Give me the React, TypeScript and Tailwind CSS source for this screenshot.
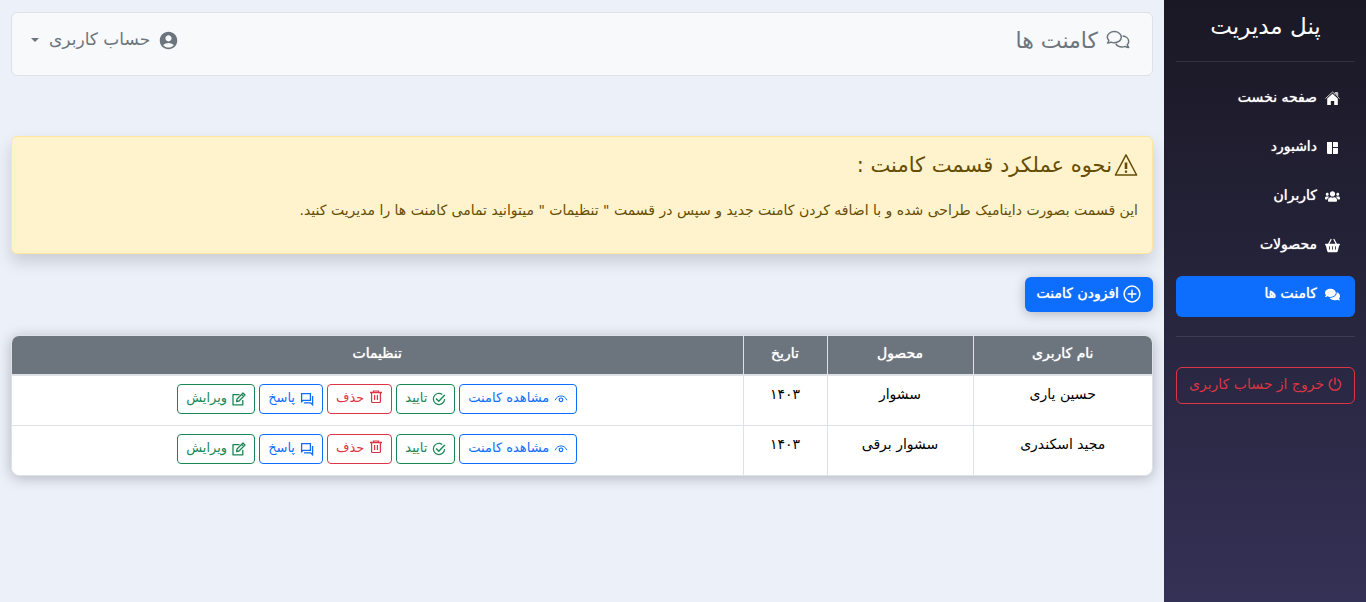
import React from "react";
import type { ReactNode } from "react";
import { FaUsers, FaComments } from "react-icons/fa";
import { FaBasketShopping } from "react-icons/fa6";
import { MdAccountCircle } from "react-icons/md";

function HomeIcon() {
  return (
    <svg viewBox="0 0 15 15" className="size-[15px]" fill="currentColor" aria-hidden="true">
      <path d="M.4 7.6 7.5 1l2.6 2.4V1.6h2.6v4.2l1.9 1.8" fill="none" stroke="currentColor" strokeWidth="1" opacity="0.75" />
      <path d="M10.6 1.8h1.7v3.8l-1.7-1.5z" opacity="0.7" />
      <path d="M7.5 2.8 2.2 7.6V14h3.6v-4h3.4v4h3.6V7.6z" />
    </svg>
  );
}

function DashboardIcon() {
  return (
    <svg viewBox="0 0 15 15" className="size-[15px]" fill="currentColor" aria-hidden="true">
      <path d="M2 2h5v12H3a1 1 0 0 1-1-1zM8 2h4a1 1 0 0 1 1 1v4H8zM8 8h5v5a1 1 0 0 1-1 1H8z" />
    </svg>
  );
}

function CommentsIcon() {
  return (
    <svg viewBox="0 0 24 24" className="size-6" fill="none" stroke="currentColor" strokeWidth="1.5" strokeLinejoin="round" aria-hidden="true">
      <path d="M8.3 3.6c3.9 0 7 2.5 7 5.6s-3.1 5.6-7 5.6c-1.3 0-2.400-.2-3.400-.7-.9.600-2 1-3.400 1 .7-.9 1.200-1.900 1.300-2.800C1.900 11.400 1.300 10.400 1.300 9.200c0-3.100 3.100-5.600 7-5.600z" />
      <path d="M16.600 8c3.500.2 6.100 2.500 6.100 5.400 0 1.300-.5 2.300-1.400 3.200.2 1 .6 1.900 1.400 2.900-1.400 0-2.600-.4-3.500-1.100-1 .4-2 .6-3.100.6-2.900 0-5.300-1.300-6.300-3.400" />
    </svg>
  );
}

function WarningIcon() {
  return (
    <svg viewBox="0 0 24 24" className="size-6 shrink-0" fill="none" stroke="currentColor" strokeWidth="1.5" aria-hidden="true">
      <path d="M12 1.800 22.600 22H1.400z" strokeLinejoin="round" />
      <path d="M12 9.500v6.500" strokeWidth="2.600" />
      <path d="M12 17.500v2.300" strokeWidth="2.200" />
    </svg>
  );
}

function PlusIcon() {
  return (
    <svg viewBox="0 0 18 18" className="size-[18px]" fill="none" stroke="currentColor" strokeWidth="1.500" aria-hidden="true">
      <circle cx="9" cy="9" r="7.900" />
      <path d="M9 5.200v7.600M5.200 9h7.600" strokeLinecap="round" />
    </svg>
  );
}

function PowerIcon() {
  return (
    <svg viewBox="0 0 14 14" className="size-[14px]" fill="none" stroke="currentColor" strokeWidth="1.500" strokeLinecap="round" aria-hidden="true">
      <path d="M7 .9v6M4 2.600a5.700 5.700 0 1 0 6 0" />
    </svg>
  );
}

function EyeIcon() {
  return (
    <svg viewBox="0 0 14 14" className="size-[14px]" fill="none" stroke="currentColor" aria-hidden="true">
      <path d="M1.200 8.200C3.200 2.500 10.800 2.500 12.800 8.200" />
      <circle cx="7" cy="7.800" r="1.800" strokeWidth="1.200" />
    </svg>
  );
}

function CheckIcon() {
  return (
    <svg viewBox="0 0 14 14" className="size-[14px]" fill="none" stroke="currentColor" strokeWidth="1.200" aria-hidden="true">
      <path d="M10.300 2.400A5.600 5.600 0 1 0 12.600 7" />
      <path d="m4 6.400 2.800 2.800 6-6.200" strokeWidth="1.400" />
    </svg>
  );
}

function TrashIcon() {
  return (
    <svg viewBox="0 0 14 14" className="mb-1 size-[14px]" fill="none" stroke="currentColor" strokeWidth="1.200" aria-hidden="true">
      <path d="M1 2.500h12" strokeWidth="1.600" />
      <path d="M4.500 2V1h5v1M2.600 2.500v9.200q0 .8.8.8h7.200q.8 0 .8-.8V2.500M5.600 5v5M8.400 5v5" />
    </svg>
  );
}

function ReplyIcon() {
  return (
    <svg viewBox="0 0 14 14" className="size-[14px]" fill="none" stroke="currentColor" strokeWidth="1.300" aria-hidden="true">
      <path d="M1.600 9.600V1.600h8.800v6.800H3z" />
      <path d="M12.600 4v8.800l-1.900-1.900H4" />
    </svg>
  );
}

function EditIcon() {
  return (
    <svg viewBox="0 0 14 14" className="size-[14px]" fill="none" stroke="currentColor" strokeWidth="1.300" strokeLinejoin="round" aria-hidden="true">
      <path d="M7.500 2.600H1v10.300h9.800V8" />
      <path d="M4.600 9.500 5 7l6-6 2 2-6 6zM9.600 2.400l2 2" />
    </svg>
  );
}

const links: { label: string; icon: ReactNode; active?: boolean }[] = [
  { label: "صفحه نخست", icon: <HomeIcon /> },
  { label: "داشبورد", icon: <DashboardIcon /> },
  { label: "کاربران", icon: <FaUsers size={15} /> },
  { label: "محصولات", icon: <FaBasketShopping size={15} /> },
  { label: "کامنت ها", icon: <FaComments size={15} />, active: true },
];

const rows = [
  { user: "حسین یاری", product: "سشوار", date: "۱۴۰۳" },
  { user: "مجید اسکندری", product: "سشوار برقی", date: "۱۴۰۳" },
];

const blue = "border-[#0d6efd] text-[#0d6efd]";
const green = "border-[#198754] text-[#198754]";
const red = "border-[#dc3545] text-[#dc3545]";

const actions = [
  { label: "مشاهده کامنت", icon: <EyeIcon />, tone: blue },
  { label: "تایید", icon: <CheckIcon />, tone: green },
  { label: "حذف", icon: <TrashIcon />, tone: red },
  { label: "پاسخ", icon: <ReplyIcon />, tone: blue },
  { label: "ویرایش", icon: <EditIcon />, tone: green },
];

function Sidebar() {
  return (
    <aside className="w-[202px] shrink-0 bg-linear-to-b from-[#1a1824] to-[#343156] pl-3 pr-[11px] text-white">
      <h1 className="pt-2 text-center text-[23px] leading-9">پنل مدیریت</h1>
      <hr className="mt-[17px] border-white/10" />
      <nav className="mt-[18px] flex flex-col gap-2">
        {links.map((l) => (
          <a
            key={l.label}
            href="#"
            className={`flex h-[41px] items-center gap-2 rounded-md px-[15px] pb-2 text-sm text-shadow-[0_0_1px_#ffffff] ${l.active ? "bg-[#0d6efd]" : ""}`}
          >
            <span className="mt-1">{l.icon}</span>
            {l.label}
          </a>
        ))}
      </nav>
      <hr className="mt-[19px] border-white/10" />
      <button className="mt-[30px] flex h-[37px] w-full items-center justify-center gap-1 rounded-md border border-[#dc3545] pb-1 text-sm text-[#dc3545]">
        <PowerIcon />
        خروج از حساب کاربری
      </button>
    </aside>
  );
}

export default function App() {
  return (
    <div dir="rtl" className="flex min-h-screen bg-[#ecf0f9] font-['DejaVu_Sans',sans-serif]">
      <Sidebar />
      <main className="min-w-0 flex-1 px-[11px] pt-3">
        <header className="flex h-16 items-center justify-between rounded-md border border-[#dee2e6] bg-[#f8f9fa] pl-[19px] pr-[22px] pb-2 text-[#6c757d]">
          <h2 className="flex items-center gap-2 text-[22px]">
            <CommentsIcon />
            کامنت ها
          </h2>
          <button className="flex items-center gap-2 text-[17px]">
            <MdAccountCircle size={21} />
            حساب کاربری
            <span className="mr-[2px] border-x-4 border-t-4 border-x-transparent border-t-current" />
          </button>
        </header>

        <section className="mt-15 h-[118px] rounded-md border border-[#ffe69c] bg-[#fff3cd] px-[14px] pt-3 text-[#664d03] shadow-[0_8px_16px_rgba(0,0,0,0.15)]">
          <h3 className="flex items-center gap-[2px] text-[21px] leading-8">
            <WarningIcon />
            نحوه عملکرد قسمت کامنت :
          </h3>
          <p className="mt-[17px] text-sm leading-6">
            این قسمت بصورت داینامیک طراحی شده و با اضافه کردن کامنت جدید و سپس در قسمت " تنظیمات " میتوانید تمامی کامنت ها را مدیریت کنید.
          </p>
        </section>

        <button className="mt-[23px] flex h-[35px] items-center gap-1 rounded-md bg-[#0d6efd] px-3 pb-1 text-sm text-white shadow-[0_2px_12px_rgba(0,0,0,0.25)] text-shadow-[0_0_1px_#ffffff]">
          <span className="mt-[2px]">
            <PlusIcon />
          </span>
          افزودن کامنت
        </button>

        <div className="mt-[23px] overflow-hidden rounded-lg border border-[#dee2e6] bg-white shadow-[0_2px_14px_rgba(0,0,0,0.25)]">
          <table className="w-full table-fixed border-collapse text-center text-sm text-black">
            <colgroup>
              <col className="w-[179px]" />
              <col className="w-[146px]" />
              <col className="w-[84px]" />
              <col />
            </colgroup>
            <thead>
              <tr className="h-[39px] border-b-2 border-[#dee2e6] bg-[#6c757d] text-white text-shadow-[0_0_1px_#ffffff]">
                {["نام کاربری", "محصول", "تاریخ", "تنظیمات"].map((h) => (
                  <th key={h} scope="col" className="border-l border-[#dee2e6] pb-1 font-normal last:border-l-0">
                    {h}
                  </th>
                ))}
              </tr>
            </thead>
            <tbody>
              {rows.map((r) => (
                <tr key={r.user} className="h-[50px] border-b border-[#dee2e6] last:border-b-0">
                  <td className="border-l border-[#dee2e6] pb-3">{r.user}</td>
                  <td className="border-l border-[#dee2e6] pb-3">{r.product}</td>
                  <td className="border-l border-[#dee2e6] pb-3">{r.date}</td>
                  <td className="pb-[3px]">
                    <div className="flex justify-center gap-1">
                      {actions.map((a) => (
                        <button
                          key={a.label}
                          className={`flex h-[30px] items-center gap-[5px] rounded-sm border px-2 text-[13px] ${a.tone}`}
                        >
                          {a.icon}
                          {a.label}
                        </button>
                      ))}
                    </div>
                  </td>
                </tr>
              ))}
            </tbody>
          </table>
        </div>
      </main>
    </div>
  );
}
